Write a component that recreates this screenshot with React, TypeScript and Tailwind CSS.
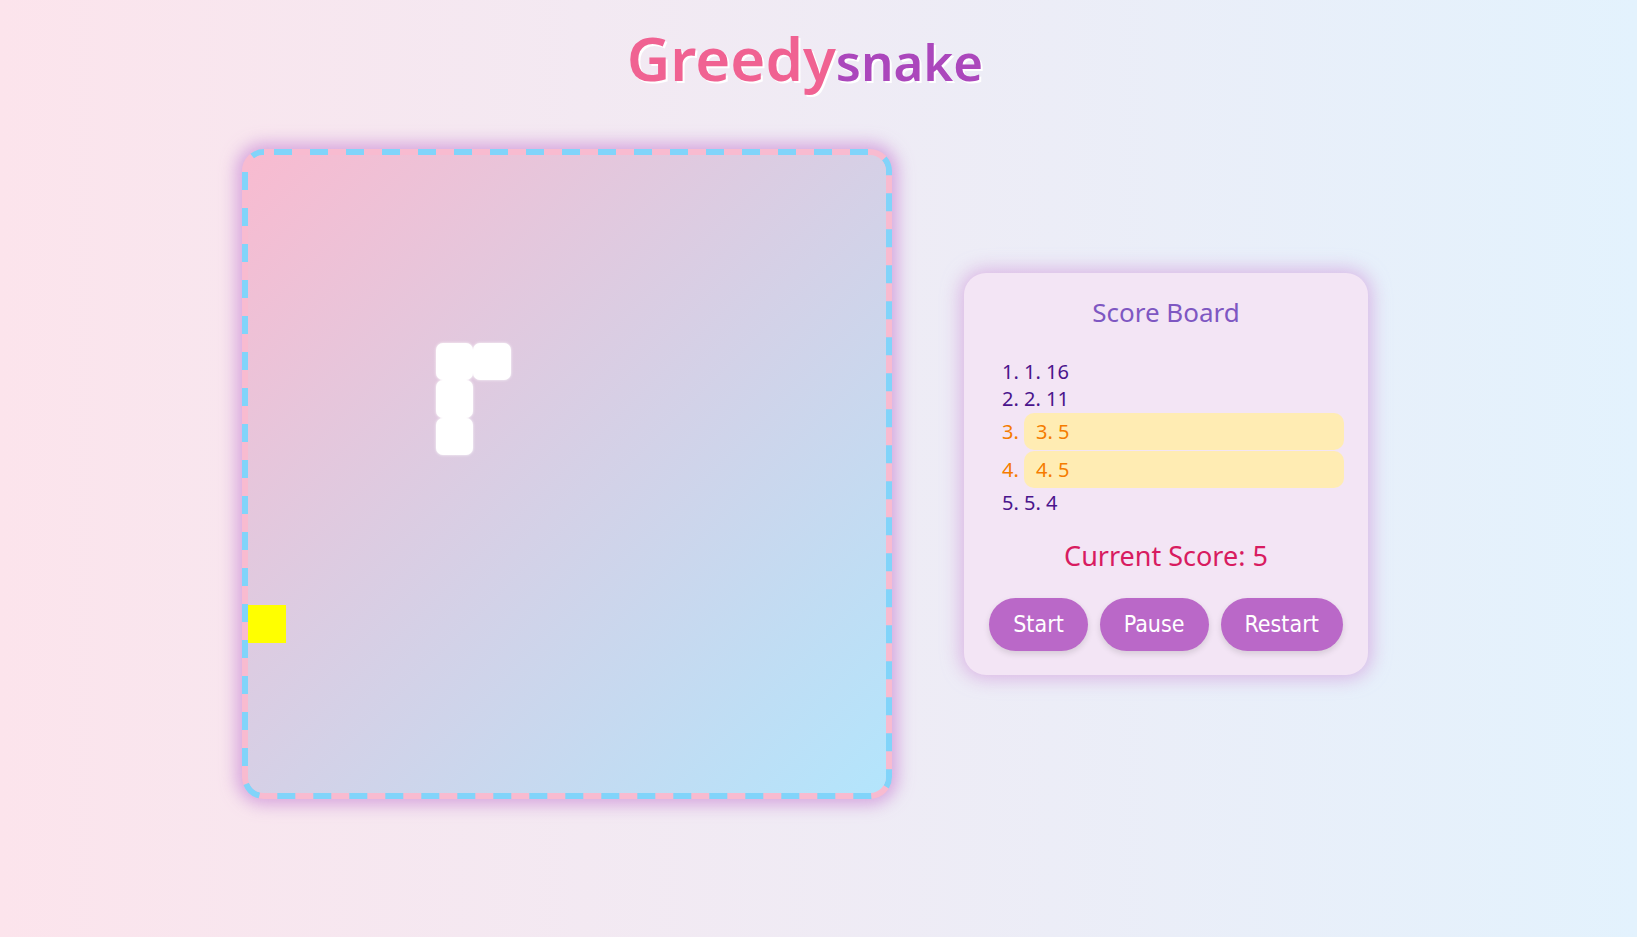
import React from 'react';

const CELL = 37.5;

const snake = [
  { x: 5, y: 5 },
  { x: 6, y: 5 },
  { x: 5, y: 6 },
  { x: 5, y: 7 },
];
const food = { x: 0, y: 12 };

const scores = [
  { label: '1. 16', hot: false },
  { label: '2. 11', hot: false },
  { label: '3. 5', hot: true },
  { label: '4. 5', hot: true },
  { label: '5. 4', hot: false },
];

function Board() {
  return (
    <div className="relative h-[650px] w-[650px] rounded-[22px] bg-[#f8bbd0] p-[6px] shadow-[0_0_16px_6px_rgba(206,147,216,0.75)]">
      {/* dashed blue frame over the pink base */}
      <svg className="pointer-events-none absolute inset-0" width="650" height="650">
        <rect
          x="3"
          y="3"
          width="644"
          height="644"
          rx="19"
          fill="none"
          stroke="#81d4fa"
          strokeWidth="6"
          strokeDasharray="18 18"
          strokeDashoffset="-10"
        />
      </svg>
      <div className="relative h-full w-full overflow-hidden rounded-[16px] bg-[linear-gradient(135deg,#f8bbd0,#b3e5fc)]">
        {snake.map((s, i) => (
          <div
            key={i}
            className="absolute rounded-[7px] bg-white shadow-[0_0_3px_rgba(255,255,255,0.9)]"
            style={{ left: s.x * CELL, top: s.y * CELL, width: CELL, height: CELL }}
          />
        ))}
        <div
          className="absolute bg-[#ffff00]"
          style={{ left: food.x * CELL, top: food.y * CELL, width: CELL, height: CELL }}
        />
      </div>
    </div>
  );
}

function ScoreBoard() {
  return (
    <div className="w-[404px] rounded-[22px] bg-[#f3e5f5] p-6 shadow-[0_0_18px_4px_rgba(206,147,216,0.6)]">
      <h2 className="text-center text-[26px] leading-[31px] text-[#7e57c2]">Score Board</h2>
      <ol className="mt-[30px] list-decimal pl-9 text-[20px] leading-[27px] text-[#4a148c]">
        {scores.map((s, i) =>
          s.hot ? (
            <li key={i} className="my-[1px] rounded-[10px] bg-[#ffecb3] px-3 py-[5px] text-[#f57c00]">
              {s.label}
            </li>
          ) : (
            <li key={i}>{s.label}</li>
          )
        )}
      </ol>
      <p className="mt-[25px] text-center text-[27px] leading-[29px] text-[#d81b60]">Current Score: 5</p>
      <div className="mt-[28px] flex justify-center gap-3 font-['DejaVu_Sans_Condensed','DejaVu_Sans',sans-serif] text-[23px] text-white">
        {['Start', 'Pause', 'Restart'].map((b) => (
          <button
            key={b}
            className="h-[53px] rounded-full bg-[#ba68c8] px-6 shadow-[0_3px_6px_rgba(0,0,0,0.12)]"
          >
            {b}
          </button>
        ))}
      </div>
    </div>
  );
}

export default function App() {
  return (
    <div className="min-h-[937px] bg-[linear-gradient(to_right,#fce4ec,#e3f2fd)] font-['Noto_Sans',sans-serif]">
      <div className="ml-[242px] w-[1126px] pt-[15px]">
        <h1 className="text-center font-semibold leading-[86px] [text-shadow:2px_2px_0_#ffffff]">
          <span className="text-[60px] text-[#f06292]">Greedy</span>
          <span className="text-[51px] text-[#ab47bc]">snake</span>
        </h1>
        <div className="mt-[31px] flex items-center gap-[72px]">
          <Board />
          <ScoreBoard />
        </div>
      </div>
    </div>
  );
}
